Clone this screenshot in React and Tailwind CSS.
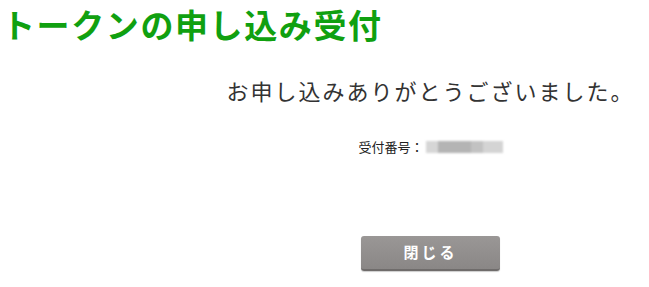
const App = () => {
  return (
    <div
      className="w-[649px] h-[287px] bg-white overflow-hidden"
      style={{ fontFamily: '"Noto Sans CJK JP", "Noto Sans", sans-serif' }}
    >
      <h1 className="pl-[2px] pt-[2px] text-[33px] leading-[44px] font-bold tracking-[1.6px] text-[#10a010]">
        トークンの申し込み受付
      </h1>
      <div className="ml-[212px] w-[437px] flex flex-col items-center">
        <p className="mt-[29px] text-[22px] leading-[30px] tracking-[2px] text-[#333333]">
          お申し込みありがとうございました。
        </p>
        <div className="mt-[34px] flex items-center text-[13px] leading-[16px] text-[#222222]">
          <span>受付番号：</span>
          <div className="ml-[2px] flex h-[12px] w-[77px] blur-[1px]">
            <div className="w-[12px] bg-[#d6d6d6]" />
            <div className="w-[33px] bg-[#b4b4b4]" />
            <div className="w-[12px] bg-[#c2c2c2]" />
            <div className="w-[20px] bg-[#d4d4d4]" />
          </div>
        </div>
        <button className="mt-[81px] w-[139px] h-[35px] rounded-[3px] bg-gradient-to-b from-[#9a9796] to-[#8a8786] border-b-2 border-[#6f6c6b] text-white text-[15px] font-bold tracking-[3px] shadow-[0_1px_1px_rgba(0,0,0,0.2)]">
          閉じる
        </button>
      </div>
    </div>
  );
};

export default App;
